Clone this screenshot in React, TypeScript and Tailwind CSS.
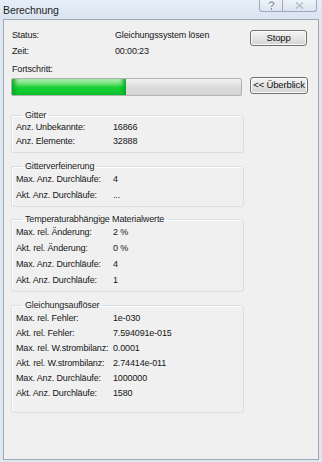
const font = '[font-family:"Liberation_Sans",Arial,sans-serif]';

type Row = { label: string; value: string };

const gitter: Row[] = [
  { label: 'Anz. Unbekannte:', value: '16866' },
  { label: 'Anz. Elemente:', value: '32888' },
];

const verfeinerung: Row[] = [
  { label: 'Max. Anz. Durchläufe:', value: '4' },
  { label: 'Akt. Anz. Durchläufe:', value: '...' },
];

const material: Row[] = [
  { label: 'Max. rel. Änderung:', value: '2 %' },
  { label: 'Akt. rel. Änderung:', value: '0 %' },
  { label: 'Max. Anz. Durchläufe:', value: '4' },
  { label: 'Akt. Anz. Durchläufe:', value: '1' },
];

const solver: Row[] = [
  { label: 'Max. rel. Fehler:', value: '1e-030' },
  { label: 'Akt. rel. Fehler:', value: '7.594091e-015' },
  { label: 'Max. rel. W.strombilanz:', value: '0.0001' },
  { label: 'Akt. rel. W.strombilanz:', value: '2.74414e-011' },
  { label: 'Max. Anz. Durchläufe:', value: '1000000' },
  { label: 'Akt. Anz. Durchläufe:', value: '1580' },
];

function Group({ title, rows, rowH, className }: { title: string; rows: Row[]; rowH: string; className: string }) {
  return (
    <fieldset className={`w-[233px] rounded-[3px] border border-[#d5dfe5] pl-[4px] shadow-[inset_1px_1px_0_#ffffff] ${className}`}>
      <legend className="ml-[6px] px-[3px] leading-[12px] text-[#1a1a1a]">{title}</legend>
      {rows.map((r, i) => (
        <div key={i} className={`flex items-center ${rowH}`}>
          <span className="w-[97px] shrink-0 whitespace-nowrap">{r.label}</span>
          <span className="whitespace-nowrap">{r.value}</span>
        </div>
      ))}
    </fieldset>
  );
}

function WinButton({ label, className }: { label: string; className: string }) {
  return (
    <button className={`flex items-center justify-center whitespace-nowrap rounded-[3px] border border-[#707070] bg-linear-to-b from-[#f3f3f3] via-[#e6e6e6] to-[#d2d2d2] text-[9.5px] text-[#111] shadow-[inset_0_0_0_1px_#fcfcfc] ${className}`}>
      {label}
    </button>
  );
}

export default function App() {
  return (
    <div className={`flex h-[462px] w-[322px] flex-col overflow-hidden bg-[#dde7f2] text-[9px] tracking-[-0.15px] text-[#161616] ${font}`}>
      {/* title bar */}
      <div className="flex h-[19px] shrink-0 items-start bg-linear-to-b from-[#e6eef8] to-[#d9e4f1]">
        <span className="pl-[3px] pt-[3px] text-[10.5px] leading-[14px] tracking-[-0.1px] text-[#1e1e1e]">Berechnung</span>
        <div className="mr-[5px] ml-auto flex">
          <div className="flex h-[12px] w-[24px] items-center justify-center rounded-bl-[3px] border border-t-0 border-[#9aa9bd] bg-linear-to-b from-[#eef3f9] to-[#dbe4ef]">
            <svg width="7" height="9" viewBox="0 0 7 9" fill="none" stroke="#5a6473" strokeWidth="1">
              <path d="M1 2.5 C1 0.5 6 0.5 6 2.5 C6 4 3.5 4 3.5 5.8" />
              <path d="M3.5 7.2 V8.6" />
            </svg>
          </div>
          <div className="flex h-[12px] w-[34px] items-center justify-center rounded-br-[3px] border border-t-0 border-l-0 border-[#9aa9bd] bg-linear-to-b from-[#eef3f9] to-[#dbe4ef]">
            <svg width="9" height="7" viewBox="0 0 9 7" fill="none" stroke="#b4bfcc" strokeWidth="1.6">
              <path d="M1 0.5 L8 6.5 M8 0.5 L1 6.5" />
            </svg>
          </div>
        </div>
      </div>

      {/* client area */}
      <div className="mx-[3px] h-[441px] shrink-0 border border-[#a3a8ae] bg-[#f0f0f0]">
        <div className="flex pl-[7px]">
          <div className="w-[233px]">
            <div className="mt-[8px] flex h-[16px] items-center">
              <span className="w-[104px] pl-[1px]">Status:</span>
              <span>Gleichungssystem lösen</span>
            </div>
            <div className="flex h-[16px] items-center">
              <span className="w-[104px] pl-[1px]">Zeit:</span>
              <span>00:00:23</span>
            </div>
            <div className="mt-[2px] flex h-[16px] items-center pl-[1px]">Fortschritt:</div>
            <div className="flex h-[18px] w-[231px] overflow-hidden rounded-[2px] border border-[#b2b2b2] bg-linear-to-b from-[#f2f2f2] via-[#dcdcdc] to-[#d4d4d4]">
              <div className="h-full w-[114px] bg-linear-to-b from-[#b4f2bb] via-[#16d236] to-[#0cc22d] shadow-[inset_6px_0_4px_-3px_#06a824,inset_-6px_0_4px_-3px_#06a824]" />
            </div>
          </div>
          <div className="ml-[6px] flex flex-col">
            <WinButton label="Stopp" className="mt-[10px] h-[16px] w-[57px]" />
            <WinButton label="<< Überblick" className="mt-[31px] h-[17px] w-[58px]" />
          </div>
        </div>

        <div className="flex flex-col pl-[7px]">
          <Group title="Gitter" rows={gitter} rowH="h-[14px]" className="mt-[13px] pb-[3px]" />
          <Group title="Gitterverfeinerung" rows={verfeinerung} rowH="h-[16px]" className="mt-[7px] pb-[2px]" />
          <Group title="Temperaturabhängige Materialwerte" rows={material} rowH="h-[16px]" className="mt-[6px] pb-[2px]" />
          <Group title="Gleichungsauflöser" rows={solver} rowH="h-[15px]" className="mt-[7px] pb-[11px]" />
        </div>
      </div>
    </div>
  );
}
